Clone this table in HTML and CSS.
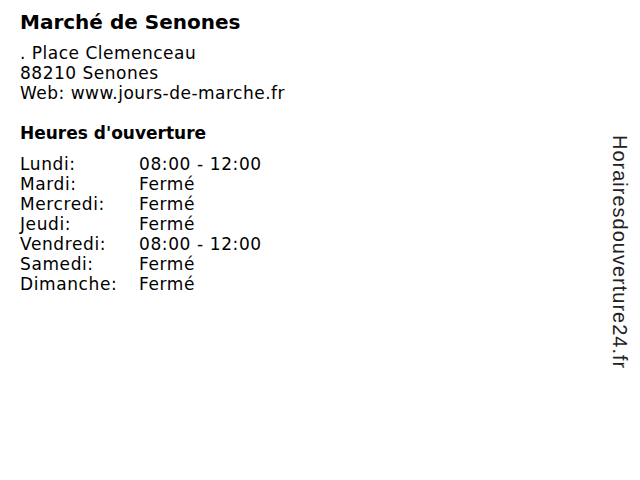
FILE: index.html
```html
<!DOCTYPE html>
<html>
<head>
<meta charset="utf-8">
<link rel="stylesheet" href="styles.css">
</head>
<body>
<div class="page">
  <h1 class="title">Marché de Senones</h1>
  <div class="address">
    <div>. Place Clemenceau</div>
    <div>88210 Senones</div>
    <div>Web: www.jours-de-marche.fr</div>
  </div>
  <h2 class="subtitle">Heures d'ouverture</h2>
  <div class="hours">
    <span>Lundi:</span><span>08:00 - 12:00</span>
    <span>Mardi:</span><span>Fermé</span>
    <span>Mercredi:</span><span>Fermé</span>
    <span>Jeudi:</span><span>Fermé</span>
    <span>Vendredi:</span><span>08:00 - 12:00</span>
    <span>Samedi:</span><span>Fermé</span>
    <span>Dimanche:</span><span>Fermé</span>
  </div>
</div>
<div class="brand">Horairesdouverture24.fr</div>
</body>
</html>
```
FILE: styles.css
```css
html, body {
  margin: 0;
  padding: 0;
  background: #fff;
}
body {
  font-family: "DejaVu Sans", sans-serif;
  color: #000;
  width: 640px;
  height: 480px;
  position: relative;
  overflow: hidden;
}
.page {
  padding: 10px 20px;
}
.title {
  font-size: 20px;
  font-weight: bold;
  margin: 0;
  line-height: 24px;
}
.address {
  margin-top: 9px;
  font-size: 17px;
  letter-spacing: 0.5px;
  line-height: 20px;
}
.subtitle {
  font-size: 17px;
  font-weight: bold;
  margin: 20px 0 0;
  line-height: 20px;
}
.hours {
  margin-top: 11px;
  display: grid;
  grid-template-columns: 119px auto;
  font-size: 17px;
  letter-spacing: 0.6px;
  line-height: 20px;
}
.brand {
  position: absolute;
  right: 9px;
  top: 135px;
  writing-mode: vertical-rl;
  font-family: "Liberation Sans", Arial, sans-serif;
  font-size: 20px;
  letter-spacing: 1px;
  line-height: 22px;
  color: #222;
}
```
